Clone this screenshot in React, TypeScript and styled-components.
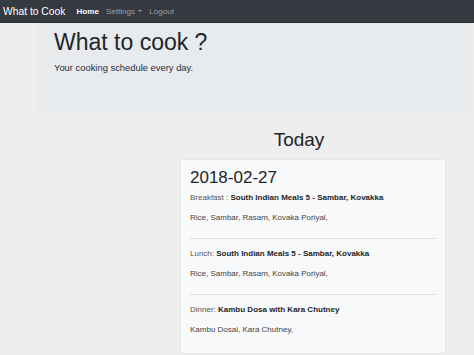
import React from "react";
import styled, { createGlobalStyle } from "styled-components";

const Global = createGlobalStyle`
  html, body { margin: 0; padding: 0; }
  body {
    background: #eeeeee;
    font-family: "Liberation Sans", Arial, Helvetica, sans-serif;
    color: #212529;
    overflow: hidden;
  }
`;

const Navbar = styled.nav`
  height: 23px;
  background: #343a40;
  display: flex;
  align-items: center;
  padding-left: 3px;
  box-sizing: border-box;
  border-bottom: 1px solid #2a2e33;
`;

const Brand = styled.span`
  color: #fff;
  font-size: 10.3px;
  margin-right: 11px;
`;

const NavLinks = styled.div`
  display: flex;
  align-items: center;
  gap: 7px;
`;

const NavLink = styled.span<{ $active?: boolean }>`
  font-size: 8.1px;
  color: ${(p) => (p.$active ? "#ffffff" : "rgba(255,255,255,0.5)")};
  font-weight: ${(p) => (p.$active ? 700 : 400)};
  display: inline-flex;
  align-items: center;
`;

const Caret = styled.span`
  display: inline-block;
  margin-left: 3px;
  width: 0;
  height: 0;
  border-left: 2.5px solid transparent;
  border-right: 2.5px solid transparent;
  border-top: 2.5px solid rgba(255,255,255,0.5);
`;

const Jumbotron = styled.header`
  margin-left: 37px;
  margin-right: 2px;
  height: 88px;
  background: #e8ebee;
  padding: 6px 17px;
  box-sizing: border-box;
`;

const Title = styled.h1`
  margin: 0;
  font-size: 23px;
  font-weight: 400;
  line-height: 1.2;
`;

const Lead = styled.p`
  margin: 5px 0 0;
  font-size: 9.4px;
  font-weight: 400;
  color: #2a2e33;
`;

const Column = styled.section`
  margin-left: 180px;
  width: 266px;
  display: flex;
  flex-direction: column;
`;

const Heading = styled.h2`
  margin: 18px 28px 7px 0;
  text-align: center;
  font-size: 19px;
  font-weight: 400;
  line-height: 1.2;
`;

const Card = styled.div`
  background: #f8f9fa;
  border: 1px solid #e6e7e9;
  border-radius: 3px;
  padding: 8px 9px 19px;
`;

const DateTitle = styled.h3`
  margin: 0 0 5px;
  font-size: 17px;
  font-weight: 400;
  line-height: 1.2;
`;

const Meal = styled.div`
  font-size: 8px;
  color: #212529;
`;

const MealLabel = styled.span`
  color: #555;
`;

const MealName = styled.b`
  font-weight: 700;
`;

const Items = styled.p`
  margin: 11px 0 0;
  font-size: 8px;
  color: #444;
`;

const Divider = styled.hr`
  border: 0;
  border-top: 1px solid #dde0e3;
  margin: 16px 0 10px;
`;

const meals = [
  { label: "Breakfast : ", name: "South Indian Meals 5 - Sambar, Kovakka", items: "Rice, Sambar, Rasam, Kovaka Poriyal," },
  { label: "Lunch: ", name: "South Indian Meals 5 - Sambar, Kovakka", items: "Rice, Sambar, Rasam, Kovaka Poriyal," },
  { label: "Dinner: ", name: "Kambu Dosa with Kara Chutney", items: "Kambu Dosai, Kara Chutney," },
];

export default function App() {
  return (
    <>
      <Global />
      <Navbar>
        <Brand>What to Cook</Brand>
        <NavLinks>
          <NavLink $active>Home</NavLink>
          <NavLink>Settings<Caret /></NavLink>
          <NavLink>Logout</NavLink>
        </NavLinks>
      </Navbar>
      <Jumbotron>
        <Title>What to cook ?</Title>
        <Lead>Your cooking schedule every day.</Lead>
      </Jumbotron>
      <Column>
        <Heading>Today</Heading>
        <Card>
          <DateTitle>2018-02-27</DateTitle>
          {meals.map((m, i) => (
            <React.Fragment key={i}>
              {i > 0 && <Divider />}
              <Meal>
                <MealLabel>{m.label}</MealLabel>
                <MealName>{m.name}</MealName>
              </Meal>
              <Items>{m.items}</Items>
            </React.Fragment>
          ))}
        </Card>
      </Column>
    </>
  );
}
